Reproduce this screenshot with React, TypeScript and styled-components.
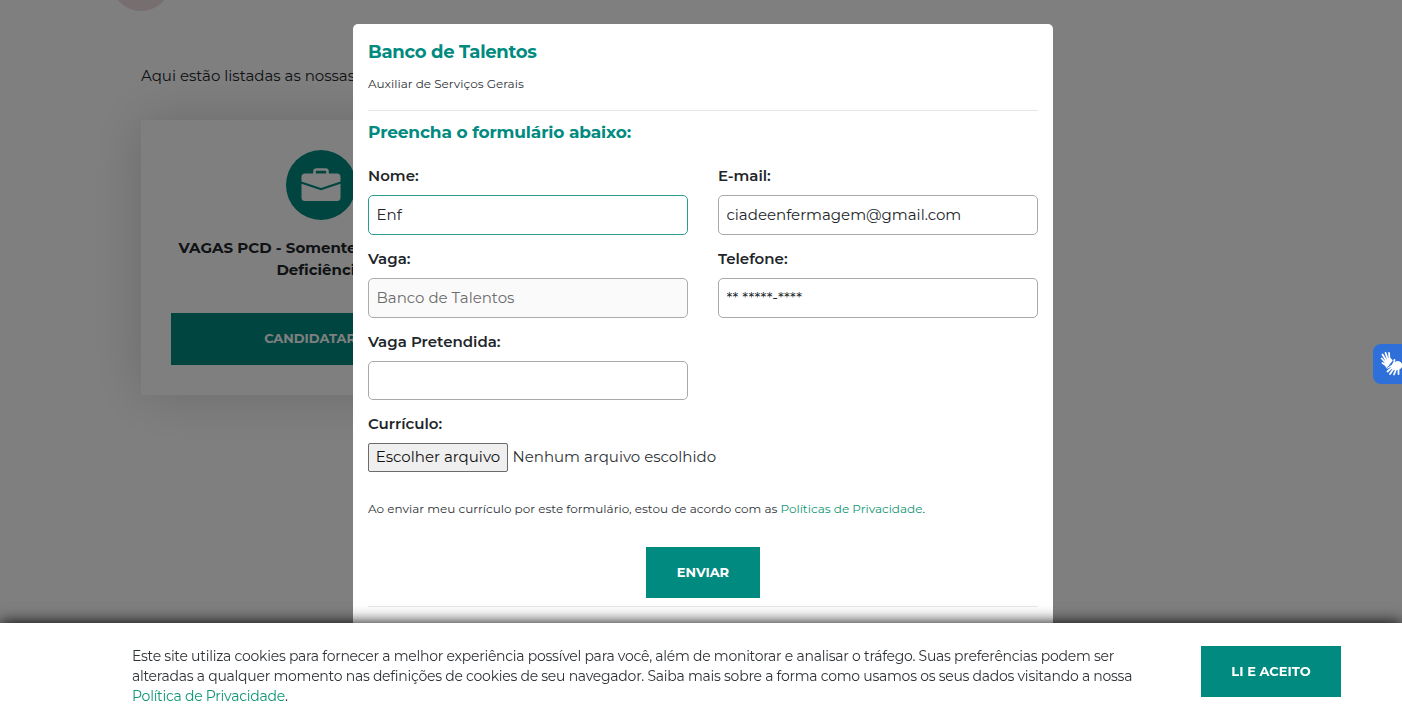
import React from "react";
import styled, { createGlobalStyle } from "styled-components";

const GlobalStyle = createGlobalStyle`
  *, *::before, *::after { box-sizing: border-box; }
  html, body, #root { height: 100%; }
  body {
    margin: 0;
    overflow: hidden;
    background: #fff;
    color: #2f3337;
    font-family: Montserrat, Inter, "Open Sans", sans-serif;
    font-size: 15px;
    font-weight: 400;
  }
  button, input { font: inherit; }
`;

const Page = styled.main`
  height: 722px;
  overflow: hidden;
  padding-left: 141px;
`;

const Portrait = styled.div`
  width: 60px;
  height: 60px;
  margin: -49px 0 0 -30px;
  border-radius: 50%;
  background: #eedede;
`;

const Intro = styled.p`
  width: 213px;
  overflow: hidden;
  margin: 53px 0 0;
  color: #212529;
  font-size: 15px;
  line-height: 24px;
  white-space: nowrap;
`;

const JobCard = styled.article`
  display: flex;
  flex-direction: column;
  align-items: center;
  width: 360px;
  height: 275px;
  margin-top: 32px;
  padding: 30px;
  background: #fff;
  box-shadow: 0 0 50px rgba(0, 0, 0, 0.17);
`;

const IconDisc = styled.div`
  display: flex;
  align-items: center;
  justify-content: center;
  width: 70px;
  height: 70px;
  border-radius: 50%;
  background: #008a80;
`;

const JobTitle = styled.h2`
  margin: 17px 0 0;
  padding-right: 1px;
  color: #212529;
  font-size: 15px;
  font-weight: 700;
  line-height: 22px;
  text-align: center;
  white-space: nowrap;
`;

const SolidButton = styled.button<{ $width: string; $height: number }>`
  width: ${(p) => p.$width};
  height: ${(p) => p.$height}px;
  flex: none;
  padding: 0 0 2px;
  border: 0;
  background: #008a80;
  color: #fff;
  font-size: 13px;
  font-weight: 700;
`;

const CardAction = styled.div`
  width: 100%;
  margin-top: 32px;
`;

const Backdrop = styled.div`
  position: fixed;
  inset: 0;
  display: flex;
  justify-content: center;
  align-items: flex-start;
  padding: 24px 0 0 4px;
  background: rgba(0, 0, 0, 0.5);
`;

const Dialog = styled.section`
  width: 700px;
  height: 720px;
  padding: 15px;
  border-radius: 5px;
  background: #fff;
`;

const Heading = styled.h3<{ $size: number; $spacing?: number }>`
  margin: 0;
  color: #008a80;
  font-size: ${(p) => p.$size}px;
  font-weight: 700;
  line-height: 26px;
  letter-spacing: ${(p) => p.$spacing ?? 0}px;
`;

const Role = styled.p`
  margin: 9px 0 16px;
  font-size: 12px;
  line-height: 20px;
`;

const Divider = styled.hr`
  height: 1px;
  margin: 0;
  border: 0;
  background: #e7e7e7;
`;

const Form = styled.form`
  padding-top: 8px;
`;

const Fields = styled.div`
  display: grid;
  grid-template-columns: 320px 320px;
  column-gap: 30px;
  row-gap: 12px;
  margin-top: 19px;
`;

const Field = styled.label`
  display: flex;
  flex-direction: column;
`;

const Label = styled.span`
  height: 24px;
  margin-bottom: 7px;
  color: #212529;
  font-size: 15px;
  font-weight: 600;
  line-height: 24px;
`;

const Input = styled.input<{ $active?: boolean; $height?: number }>`
  width: 100%;
  height: ${(p) => p.$height ?? 40}px;
  padding: 0 7.5px 2px;
  border: 1px solid ${(p) => (p.$active ? "#2c9c90" : "#a9a9a9")};
  border-radius: 5px;
  outline: 0;
  background: #fff;
  color: #212529;
  font-size: 15px;

  &:disabled {
    background: #fafafa;
    border-color: #acacac;
    color: #6c6c6c;
  }
`;

const FileRow = styled.div`
  display: flex;
  align-items: center;
  gap: 4.5px;
  height: 29px;
  white-space: nowrap;
`;

const FileButton = styled.button`
  flex: none;
  width: 140px;
  height: 29px;
  padding: 0 0 2px;
  border: 1px solid #6b6b6b;
  border-radius: 2px;
  background: #efefef;
  color: #111;
  font-size: 15px;
`;

const FileName = styled.span`
  padding-bottom: 2px;
`;

const Consent = styled.p`
  margin: 27px 0 28px;
  font-size: 12px;
  line-height: 20px;
  white-space: nowrap;
`;

const Link = styled.a`
  color: #109575;
  text-decoration: none;
`;

const SubmitRow = styled.div`
  display: flex;
  justify-content: center;
  margin-bottom: 8px;
`;

const AccessTab = styled.aside`
  position: fixed;
  top: 344px;
  right: 0;
  width: 29px;
  height: 40px;
  overflow: hidden;
  border-radius: 8px 0 0 8px;
  background: #2e6fd9;
  color: #fff;

  svg { display: block; }
`;

const CookieBar = styled.footer`
  position: fixed;
  right: 0;
  bottom: 0;
  left: 0;
  display: flex;
  align-items: flex-start;
  justify-content: space-between;
  height: 99px;
  padding: 23px 61px 0 132px;
  background: #fff;
  box-shadow: 0 0 15px #000;
`;

const CookieText = styled.p`
  margin: 0;
  color: #2f3337;
  font-size: 14px;
  line-height: 20px;
  letter-spacing: -0.256px;
`;

const Line = styled.span`
  display: block;
  white-space: nowrap;
`;

const Briefcase = () => (
  <svg width="40" height="34" viewBox="0 0 40 34" aria-hidden="true">
    <path d="M13.5 6V3.500Q13.500 1.500 15.500 1.500H24.500Q26.500 1.500 26.500 3.500V6" fill="none" stroke="#fff" strokeWidth="2.600" />
    <path d="M4 5.500H36Q39.500 5.500 39.500 9V13.500L20 20L0.500 13.500V9Q0.500 5.500 4 5.500Z" fill="#fff" />
    <path d="M0.500 15.800L20 22.300L39.500 15.800V29.500Q39.500 33 36 33H4Q0.500 33 0.500 29.500Z" fill="#fff" />
  </svg>
);

const SigningHands = () => (
  <svg width="29" height="40" viewBox="0 0 29 40" fill="none" stroke="#fff" strokeLinecap="round" strokeLinejoin="round" aria-hidden="true">
    <path d="M13.500 17L9.500 10.500M14.800 15.500L12.500 8.800M16.500 15L16 9M12.500 18.500L8.700 14.500M12.500 21L9.500 19" strokeWidth="1.800" />
    <path d="M12.500 16.500L17 14.500L19 16.500L16.500 19.500L14 23.500Q12 22 12 19Z" fill="#fff" strokeWidth="1.200" />
    <path d="M20.500 19.500L21.500 15.800M18.500 24L14.500 27.500M20.500 25L17 30M23 25.500L21 30.500M25.500 25L25.500 30M18 22L14.500 23.800" strokeWidth="1.800" />
    <path d="M20 19.500L24 17.500Q27.500 17.500 28.500 19.500V23.500L25.500 25.500H21L18.500 23.500Q18 21 20 19.500Z" fill="#fff" strokeWidth="1" />
    <path d="M20.200 17.800L17.500 21.200L14.500 23.300" stroke="#2e6fd9" strokeWidth="0.900" />
  </svg>
);

export default function App() {
  return (
    <>
      <GlobalStyle />
      <Page>
        <Portrait />
        <Intro>Aqui estão listadas as nossas</Intro>
        <JobCard>
          <IconDisc>
            <Briefcase />
          </IconDisc>
          <JobTitle>
            VAGAS PCD - Somente Pessoas com
            <br />
            Deficiência
          </JobTitle>
          <CardAction>
            <SolidButton $width="100%" $height={52}>CANDIDATAR-SE</SolidButton>
          </CardAction>
        </JobCard>
      </Page>

      <Backdrop>
        <Dialog>
          <Heading $size={18} $spacing={-0.3}>Banco de Talentos</Heading>
          <Role>Auxiliar de Serviços Gerais</Role>
          <Divider />
          <Form>
            <Heading $size={17} $spacing={-0.14}>Preencha o formulário abaixo:</Heading>
            <Fields>
              <Field>
                <Label>Nome:</Label>
                <Input $active defaultValue="Enf" />
              </Field>
              <Field>
                <Label>E-mail:</Label>
                <Input defaultValue="ciadeenfermagem@gmail.com" />
              </Field>
              <Field>
                <Label>Vaga:</Label>
                <Input disabled defaultValue="Banco de Talentos" />
              </Field>
              <Field>
                <Label>Telefone:</Label>
                <Input defaultValue="** *****-****" />
              </Field>
              <Field>
                <Label>Vaga Pretendida:</Label>
                <Input $height={39} />
              </Field>
              <div />
              <Field as="div">
                <Label>Currículo:</Label>
                <FileRow>
                  <FileButton type="button">Escolher arquivo</FileButton>
                  <FileName>Nenhum arquivo escolhido</FileName>
                </FileRow>
              </Field>
            </Fields>
            <Consent>
              Ao enviar meu currículo por este formulário, estou de acordo com as <Link>Políticas de Privacidade</Link>.
            </Consent>
            <SubmitRow>
              <SolidButton type="button" $width="114px" $height={51}>ENVIAR</SolidButton>
            </SubmitRow>
            <Divider />
          </Form>
        </Dialog>
      </Backdrop>

      <AccessTab>
        <SigningHands />
      </AccessTab>

      <CookieBar>
        <CookieText>
          <Line>
            Este site utiliza cookies para fornecer a melhor experiência possível para você, além de monitorar e analisar o tráfego. Suas preferências podem ser
          </Line>
          <Line>
            alteradas a qualquer momento nas definições de cookies de seu navegador. Saiba mais sobre a forma como usamos os seus dados visitando a nossa
          </Line>
          <Line>
            <Link>Política de Privacidade</Link>.
          </Line>
        </CookieText>
        <SolidButton $width="140px" $height={51}>LI E ACEITO</SolidButton>
      </CookieBar>
    </>
  );
}
